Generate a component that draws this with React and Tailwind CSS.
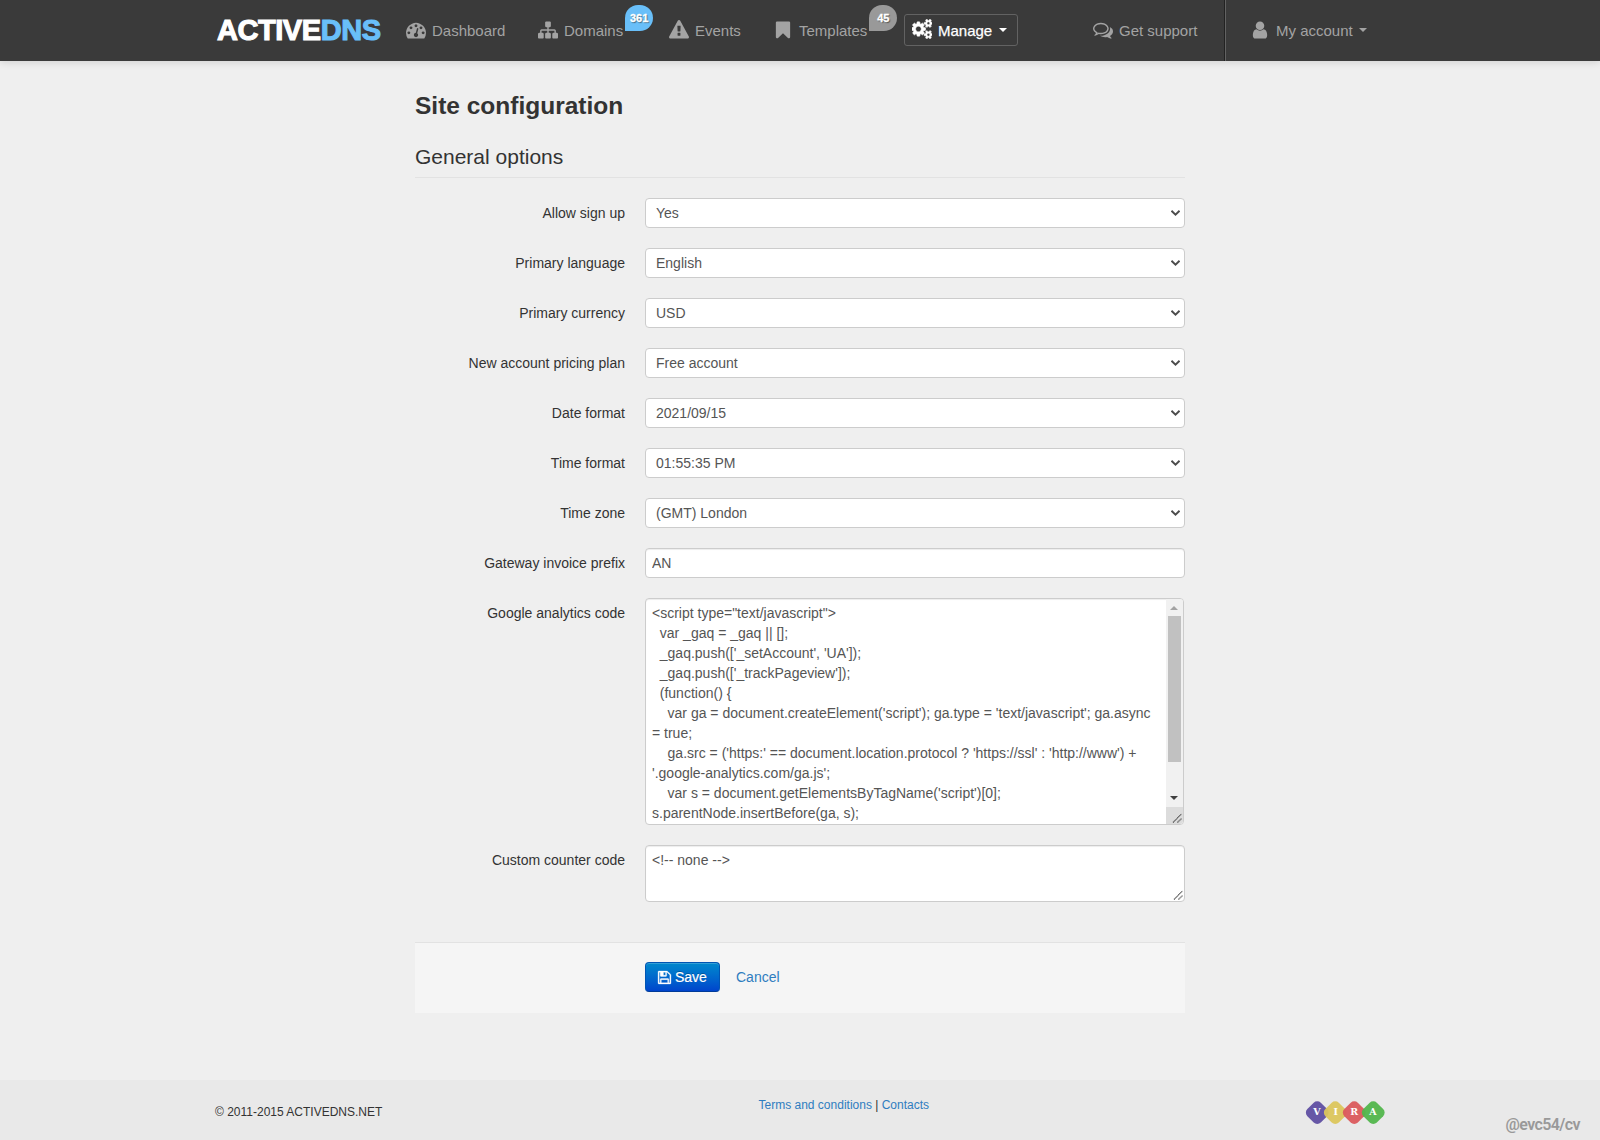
import React from "react";

const ICONS = {
  dashboard:
    "M384 1152q0-53-37.5-90.5t-90.5-37.5-90.5 37.5-37.5 90.5 37.5 90.5 90.5 37.5 90.5-37.5 37.5-90.5zm192-448q0-53-37.5-90.5t-90.5-37.5-90.5 37.5-37.5 90.5 37.5 90.5 90.5 37.5 90.5-37.5 37.5-90.5zm428 481l101-382q6-26-7.5-48.5t-38.5-29.5-48 6.5-30 39.5l-101 382q-60 5-107 43.5t-63 98.5q-20 77 20 146t117 89 146-20 89-117q16-60-6-117t-72-91zm660-33q0-53-37.5-90.5t-90.5-37.5-90.5 37.5-37.5 90.5 37.5 90.5 90.5 37.5 90.5-37.5 37.5-90.5zm-640-640q0-53-37.5-90.5t-90.5-37.5-90.5 37.5-37.5 90.5 37.5 90.5 90.5 37.5 90.5-37.5 37.5-90.5zm448 192q0-53-37.5-90.5t-90.5-37.5-90.5 37.5-37.5 90.5 37.5 90.5 90.5 37.5 90.5-37.5 37.5-90.5zm320 448q0 261-141 483-19 29-54 29h-1402q-35 0-54-29-141-221-141-483 0-182 71-348t191-286 286-191 348-71 348 71 286 191 191 286 71 348z",
  sitemap:
    "M1792 1248v320q0 40-28 68t-68 28h-320q-40 0-68-28t-28-68v-320q0-40 28-68t68-28h96v-192h-512v192h96q40 0 68 28t28 68v320q0 40-28 68t-68 28h-320q-40 0-68-28t-28-68v-320q0-40 28-68t68-28h96v-192h-512v192h96q40 0 68 28t28 68v320q0 40-28 68t-68 28h-320q-40 0-68-28t-28-68v-320q0-40 28-68t68-28h96v-192q0-52 38-90t90-38h512v-192h-96q-40 0-68-28t-28-68v-320q0-40 28-68t68-28h320q40 0 68 28t28 68v320q0 40-28 68t-68 28h-96v192h512q52 0 90 38t38 90v192h96q40 0 68 28t28 68z",
  warning:
    "M1024 1375v-190q0-14-9.5-23.5t-22.5-9.5h-192q-13 0-22.5 9.5t-9.5 23.5v190q0 14 9.5 23.5t22.5 9.5h192q13 0 22.5-9.5t9.5-23.5zm-2-374l18-459q0-12-10-19-13-11-24-11h-220q-11 0-24 11-10 7-10 21l17 457q0 10 10 16.5t24 6.5h185q14 0 23.5-6.5t10.5-16.5zm-14-934l768 1408q35 63-2 126-17 29-46.5 46t-63.5 17h-1536q-34 0-63.5-17t-46.5-46q-37-63-2-126l768-1408q17-31 47-49t65-18 65 18 47 49z",
  bookmark:
    "M1420 128q23 0 44 9 33 13 52.5 41t19.5 62v1289q0 34-19.5 62t-52.5 41q-19 8-44 8-48 0-83-32l-441-424-441 424q-36 33-83 33-23 0-44-9-33-13-52.5-41t-19.5-62v-1289q0-34 19.5-62t52.5-41q21-9 44-9h1048z",
  cogs: "M832 896q0-106-75-181t-181-75-181 75-75 181 75 181 181 75 181-75 75-181zm768 512q0-52-38-90t-90-38-90 38-38 90q0 53 37.5 90.5t90.5 37.5 90.5-37.5 37.5-90.5zm0-1024q0-52-38-90t-90-38-90 38-38 90q0 53 37.5 90.5t90.5 37.5 90.5-37.5 37.5-90.5zm-384 421v185q0 10-7 19.5t-16 10.5l-155 24q-11 35-32 76 34 48 90 115 7 11 7 20 0 12-7 19-23 30-82.5 89.5t-78.5 59.5q-11 0-21-7l-115-90q-37 19-77 31-11 108-23 155-7 24-30 24h-186q-11 0-20-7.5t-10-17.5l-23-153q-34-10-75-31l-118 89q-7 7-20 7-11 0-21-8-144-133-144-160 0-9 7-19 10-14 41-53t47-61q-23-44-35-82l-152-24q-10-1-17-9.5t-7-19.5v-185q0-10 7-19.5t16-10.5l155-24q11-35 32-76-34-48-90-115-7-11-7-20 0-12 7-20 22-30 82-89t79-59q11 0 21 7l115 90q34-18 77-32 11-108 23-154 7-24 30-24h186q11 0 20 7.5t10 17.5l23 153q34 10 75 31l118-89q8-7 20-7 11 0 21 8 144 133 144 160 0 8-7 19-12 16-42 54t-45 60q23 48 34 82l152 23q10 2 17 10.5t7 19.5zm640 533v140q0 16-149 31-12 27-30 52 51 113 51 138 0 4-4 7-122 71-124 71-8 0-46-47t-52-68q-20 2-30 2t-30-2q-14 21-52 68t-46 47q-2 0-124-71-4-3-4-7 0-25 51-138-18-25-30-52-149-15-149-31v-140q0-16 149-31 13-29 30-52-51-113-51-138 0-4 4-7 4-2 35-20t59-34 30-16q8 0 46 46.5t52 67.5q20-2 30-2t30 2q51-71 92-112l6-2q4 0 124 70 4 3 4 7 0 25-51 138 17 23 30 52 149 15 149 31zm0-1024v140q0 16-149 31-12 27-30 52 51 113 51 138 0 4-4 7-122 71-124 71-8 0-46-47t-52-68q-20 2-30 2t-30-2q-14 21-52 68t-46 47q-2 0-124-71-4-3-4-7 0-25 51-138-18-25-30-52-149-15-149-31v-140q0-16 149-31 13-29 30-52-51-113-51-138 0-4 4-7 4-2 35-20t59-34 30-16q8 0 46 46.5t52 67.5q20-2 30-2t30 2q51-71 92-112l6-2q4 0 124 70 4 3 4 7 0 25-51 138 17 23 30 52 149 15 149 31z",
  comments:
    "M704 384q-153 0-286 52t-211.5 141-78.5 191q0 82 53 158t149 132l97 56-35 84q34-20 62-39l44-31 53 10q78 14 153 14 153 0 286-52t211.5-141 78.5-191-78.5-191-211.5-141-286-52zm0-128q191 0 353.5 68.5t256.5 186.5 94 257-94 257-256.5 186.5-353.5 68.5q-86 0-176-16-124 88-278 128-36 9-86 16h-3q-11 0-20.5-8t-11.5-21q-1-3-1-6.5t.5-6.5 2-6l2.5-5 3.5-5.5 4-5 4.5-5 4-4.5q5-6 23-25t26-29.5 22.5-29 25-38.5 20.5-44q-124-72-195-177t-71-224q0-139 94-257t256.5-186.5 353.5-68.5zm822 1169q10 24 20.5 44t25 38.5 22.5 29 26 29.5 23 25q1 1 4 4.5t4.5 5 4 5 3.5 5.5l2.5 5 2 6 .5 6.5-1 6.5q-3 14-13 22t-22 7q-50-7-86-16-154-40-278-128-90 16-176 16-271 0-472-132 58 4 88 4 161 0 309-45t264-129q125-92 192-212t67-254q0-77-23-152 129 71 204 178t75 230q0 120-71 224.5t-195 176.5z",
  user: "M1536 1399q0 109-62.5 187t-150.5 78h-854q-88 0-150.5-78t-62.5-187q0-85 8.5-160.5t31.5-152 58.5-131 94-89 134.5-34.5q131 128 313 128t313-128q76 0 134.5 34.5t94 89 58.5 131 31.5 152 8.5 160.5zm-256-887q0 159-112.5 271.5t-271.5 112.5-271.5-112.5-112.5-271.5 112.5-271.5 271.5-112.5 271.5 112.5 112.5 271.5z",
  save: "M512 1536h768v-384h-768v384zm896 0h128v-896q0-14-10-38.5t-20-34.5l-281-281q-10-10-34-20t-39-10v416q0 40-28 68t-68 28h-576q-40 0-68-28t-28-68v-416h-128v1280h128v-416q0-40 28-68t68-28h832q40 0 68 28t28 68v416zm-384-928v-320q0-13-9.5-22.5t-22.5-9.5h-192q-13 0-22.5 9.5t-9.5 22.5v320q0 13 9.5 22.5t22.5 9.5h192q13 0 22.5-9.5t9.5-22.5zm640 32v928q0 40-28 68t-68 28h-1344q-40 0-68-28t-28-68v-1344q0-40 28-68t68-28h928q40 0 88 20t76 48l280 280q28 28 48 76t20 88z",
};

function Icon({ name, className }) {
  return (
    <svg viewBox="0 0 1792 1792" fill="currentColor" className={className}>
      <path d={ICONS[name]} />
    </svg>
  );
}

function Caret() {
  return <span className="block size-0 border-x-4 border-t-4 border-x-transparent border-t-current" />;
}

function NavItem({ icon, label, badge, badgeColor, className, caret }) {
  return (
    <a className={`flex h-[60px] shrink-0 items-center text-[15px] text-[#a3a3a3] ${className}`}>
      <Icon name={icon} className="mr-1.5 size-5 shrink-0" />
      <span className="whitespace-nowrap pt-0.5">{label}</span>
      {badge && (
        <span
          className={`mb-6 ml-0.5 flex h-[26px] w-7 items-center justify-center rounded-[13px] rounded-bl-none pt-0.5 text-[11px] font-bold text-white [-webkit-text-stroke:0.3px_white] [text-shadow:1px_1px_1px_rgba(0,0,0,0.5)] ${badgeColor}`}
        >
          {badge}
        </span>
      )}
      {caret && (
        <span className="ml-1.5">
          <Caret />
        </span>
      )}
    </a>
  );
}

function Navbar() {
  return (
    <header className="h-[61px] bg-[#3a3a3a] shadow-[0_1px_8px_rgba(0,0,0,0.14)]">
      <div className="mx-auto flex h-[61px] w-[1170px]">
        <a className="flex h-[60px] w-[191px] shrink-0 items-center pl-0.5 text-[29px] leading-none font-bold tracking-[-0.45px] text-white [-webkit-text-stroke:1.1px_currentColor]">
          <span>ACTIVE</span>
          <span className="text-[#69bff9]">DNS</span>
        </a>
        <NavItem icon="dashboard" label="Dashboard" className="w-[132px]" />
        <NavItem icon="sitemap" label="Domains" className="w-[131px]" badge="361" badgeColor="bg-[#69bff9]" />
        <NavItem icon="warning" label="Events" className="w-[104px]" />
        <NavItem icon="bookmark" label="Templates" className="w-[131px]" badge="45" badgeColor="bg-[#999999]" />
        <a className="mt-3.5 flex h-8 w-[114px] shrink-0 items-center rounded-[3px] border border-[#626262] pl-[7px] text-[15px] text-white [-webkit-text-stroke:0.25px_white]">
          <Icon name="cogs" className="mr-1.5 mb-0.5 size-5 shrink-0 stroke-white stroke-[50]" />
          <span className="pt-0.5">Manage</span>
          <span className="ml-[7px]">
            <Caret />
          </span>
        </a>
        <NavItem icon="comments" label="Get support" className="ml-[75px] w-[131px]" />
        <div className="h-[61px] w-0.5 shrink-0 border-l border-[#222222] bg-[#626262]" />
        <NavItem icon="user" label="My account" className="ml-6" caret />
      </div>
    </header>
  );
}

function Row({ label, children }) {
  return (
    <div className="mb-5 flex">
      <label className="w-[210px] shrink-0 pt-[5px] text-right leading-5 text-[#333333]">{label}</label>
      <div className="ml-5 w-[540px]">{children}</div>
    </div>
  );
}

const SELECTS = [
  ["Allow sign up", "Yes"],
  ["Primary language", "English"],
  ["Primary currency", "USD"],
  ["New account pricing plan", "Free account"],
  ["Date format", "2021/09/15"],
  ["Time format", "01:55:35 PM"],
  ["Time zone", "(GMT) London"],
];

const ANALYTICS = `<script type="text/javascript">
  var _gaq = _gaq || [];
  _gaq.push(['_setAccount', 'UA']);
  _gaq.push(['_trackPageview']);
  (function() {
    var ga = document.createElement('script'); ga.type = 'text/javascript'; ga.async
= true;
    ga.src = ('https:' == document.location.protocol ? 'https://ssl' : 'http://www') +
'.google-analytics.com/ga.js';
    var s = document.getElementsByTagName('script')[0];
s.parentNode.insertBefore(ga, s);`;

function Grip() {
  return (
    <svg viewBox="0 0 10 10" className="size-[10px]" stroke="#444" strokeWidth="1.1" strokeDasharray="1.1 0.4">
      <path d="M1 9.5 9.5 1M5.5 9.5 9.5 5.5" fill="none" />
    </svg>
  );
}

function Scrollbar() {
  return (
    <div className="flex w-[17px] shrink-0 flex-col items-center bg-[#f1f1f1] pr-px">
      <div className="flex h-[17px] items-center">
        <span className="block size-0 border-x-4 border-b-4 border-x-transparent border-b-[#a3a3a3]" />
      </div>
      <div className="h-[146px] w-[13px] bg-[#c1c1c1]" />
      <div className="flex-1" />
      <div className="flex h-[18px] items-center">
        <span className="block size-0 border-x-4 border-t-4 border-x-transparent border-t-[#404040]" />
      </div>
      <div className="-mr-px flex h-[17px] w-[17px] items-end justify-end bg-[#dcdcdc] pr-px pb-px">
        <Grip />
      </div>
    </div>
  );
}

const VIRA = [
  ["V", "bg-[#5f4fa2]"],
  ["I", "bg-[#dcc65c]"],
  ["R", "bg-[#db5a5d]"],
  ["A", "bg-[#52b64c]"],
];

export default function App() {
  return (
    <div className="flex h-[1140px] w-[1600px] flex-col bg-[#efefef] font-['Liberation_Sans',Arial,sans-serif] text-sm text-[#333333]">
      <Navbar />
      <main className="mx-auto flex w-[770px] flex-1 flex-col">
        <h1 className="mt-[25px] text-[24.5px] leading-10 font-bold">Site configuration</h1>
        <h2 className="mt-[11px] border-b border-[#e2e2e2] text-[21px] leading-10">General options</h2>
        <form className="mt-5">
          {SELECTS.map(([label, value]) => (
            <Row key={label} label={label}>
              <div className="flex h-[30px] w-full items-center rounded-[4px] border border-[#cccccc] bg-white pr-1 pl-2.5 text-[#555555]">
                <span className="flex-1">{value}</span>
                <svg viewBox="0 0 9 6" className="h-1.5 w-[9px]" fill="none" stroke="#4c4c4c" strokeWidth="1.9">
                  <path d="M0.5 0.8 4.5 4.6 8.5 0.8" />
                </svg>
              </div>
            </Row>
          ))}
          <Row label="Gateway invoice prefix">
            <input
              defaultValue="AN"
              className="block h-[30px] w-full rounded-[4px] border border-[#cccccc] bg-white px-1.5 py-1 text-sm text-[#555555] shadow-[inset_0_1px_1px_rgba(0,0,0,0.075)]"
            />
          </Row>
          <Row label="Google analytics code">
            <div className="flex h-[227px] w-[539px] overflow-hidden rounded-[4px] border border-[#cccccc] bg-white shadow-[inset_0_1px_1px_rgba(0,0,0,0.075)]">
              <pre className="flex-1 overflow-hidden py-1 pl-1.5 font-['Liberation_Sans',Arial,sans-serif] text-sm leading-5 text-[#555555]">
                {ANALYTICS}
              </pre>
              <Scrollbar />
            </div>
          </Row>
          <Row label="Custom counter code">
            <div className="flex h-[57px] justify-between rounded-[4px] border border-[#cccccc] bg-white py-1 pl-1.5 leading-5 text-[#555555] shadow-[inset_0_1px_1px_rgba(0,0,0,0.075)]">
              <span>{"<!-- none -->"}</span>
              <span className="-mb-1 self-end pr-px pb-px">
                <Grip />
              </span>
            </div>
          </Row>
          <div className="mt-10 flex h-[71px] items-start border-t border-[#e2e2e2] bg-[#f5f5f5] pt-[19px] pl-[230px]">
            <button
              type="button"
              className="flex h-[30px] w-[75px] items-center rounded-[4px] border border-[#0055b3] border-b-[#003b99] bg-linear-to-b from-[#0088cc] to-[#0044cc] pl-[11px] text-sm text-white shadow-[inset_0_1px_0_rgba(255,255,255,0.2)] [text-shadow:0_-1px_0_rgba(0,0,0,0.25)]"
            >
              <Icon name="save" className="mr-[3px] size-[15px] shrink-0 stroke-white stroke-[40]" />
              <span className="[-webkit-text-stroke:0.2px_white]">Save</span>
            </button>
            <a className="ml-4 pt-[5px] leading-5 text-[#2f7dc0]">Cancel</a>
          </div>
        </form>
      </main>
      <footer className="flex h-[60px] bg-[#e9e9e9] text-xs">
        <div className="ml-[215px] w-[543.5px] pt-6 leading-4">© 2011-2015 ACTIVEDNS.NET</div>
        <div className="w-[546.5px] pt-[17px] leading-4">
          <a className="text-[#2f7dc0]">Terms and conditions</a> | <a className="text-[#2f7dc0]">Contacts</a>
        </div>
        <div className="flex pt-5">
          {VIRA.map(([letter, color]) => (
            <span key={letter} className="-mr-[5.4px] grid size-6 place-items-center">
              <span className={`col-start-1 row-start-1 size-[18.5px] rotate-45 rounded-[5px] opacity-95 ${color}`} />
              <span className="z-10 col-start-1 row-start-1 font-['DejaVu_Serif',serif] text-[9.5px] leading-none font-bold text-white">
                {letter}
              </span>
            </span>
          ))}
        </div>
        <div className="ml-auto pt-[35px] pr-5 font-['Roboto',sans-serif] text-[16px] leading-5 font-semibold tracking-[-0.6px] text-[#999999]">
          @evc54/cv
        </div>
      </footer>
    </div>
  );
}
